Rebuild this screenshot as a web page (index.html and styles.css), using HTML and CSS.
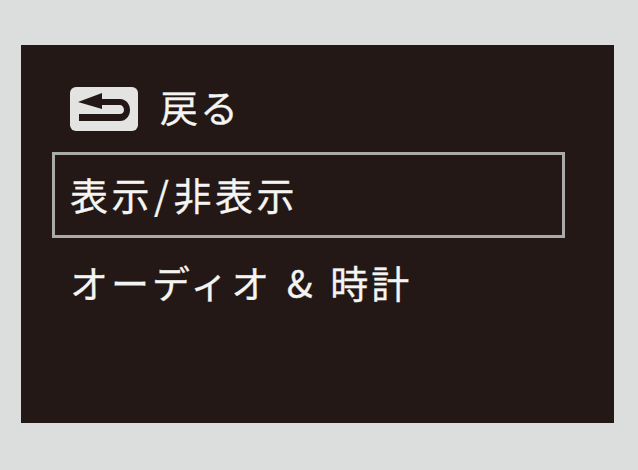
FILE: index.html
```html
<!DOCTYPE html>
<html lang="ja">
<head>
  <meta charset="UTF-8">
  <meta name="viewport" content="width=device-width, initial-scale=1.0">
  <title>Menu</title>
  <link rel="stylesheet" href="styles.css">
</head>
<body>

  <div class="screen">
    <div class="back">
      <span class="back-icon">
        <svg viewBox="0 0 68 44" width="68" height="44">
          <path d="M8 15L32 6V12H50C56 12 60 17 60 23C60 29 56 34 50 34H9V27H50C52 27 54 25.5 54 23C54 20 52 18 50 18H32V22Z" fill="#231815"/>
        </svg>
      </span>
      <span class="back-label">戻る</span>
    </div>
    <div class="item selected">表示<span class="slash">/</span>非表示</div>
    <div class="item audio">オーディオ &amp; 時計</div>
  </div>

</body>
</html>
```

FILE: styles.css
```css
/* Basic styling */
body {
  margin: 0;
  padding: 45px 24px 47px 21px;
  background-color: #dcdddd;
  font-family: "Noto Sans CJK JP", "Liberation Sans", sans-serif;
  color: #f4f4f2;
}

.screen {
  height: 378px;
  padding: 42px 49px 0 31px;
  background-color: #231815;
  box-sizing: border-box;
}

/* Back row */
.back {
  display: flex;
  align-items: center;
  gap: 22px;
  margin-left: 18px;
  height: 44px;
}

.back-icon {
  display: block;
  width: 68px;
  height: 44px;
  background: #e3e3e1;
  border-radius: 6px;
}

.back-icon svg {
  display: block;
}

.back-label {
  font-size: 38px;
  line-height: 38px;
  letter-spacing: 2px;
  padding-bottom: 7px;
  -webkit-text-stroke: 0.3px #f4f4f2;
}

/* Menu items */
.item {
  font-size: 38px;
  line-height: 50px;
  white-space: nowrap;
  -webkit-text-stroke: 0.3px #f4f4f2;
}

.selected {
  margin-top: 21px;
  height: 86px;
  box-sizing: border-box;
  padding: 14px 0 0 15px;
  border: 3px solid #a9aba9;
  letter-spacing: 3.5px;
}

.slash {
  margin: 0 1px;
}

.audio {
  margin-top: 19px;
  padding-left: 18px;
  letter-spacing: 3px;
  word-spacing: 3px;
}
```
